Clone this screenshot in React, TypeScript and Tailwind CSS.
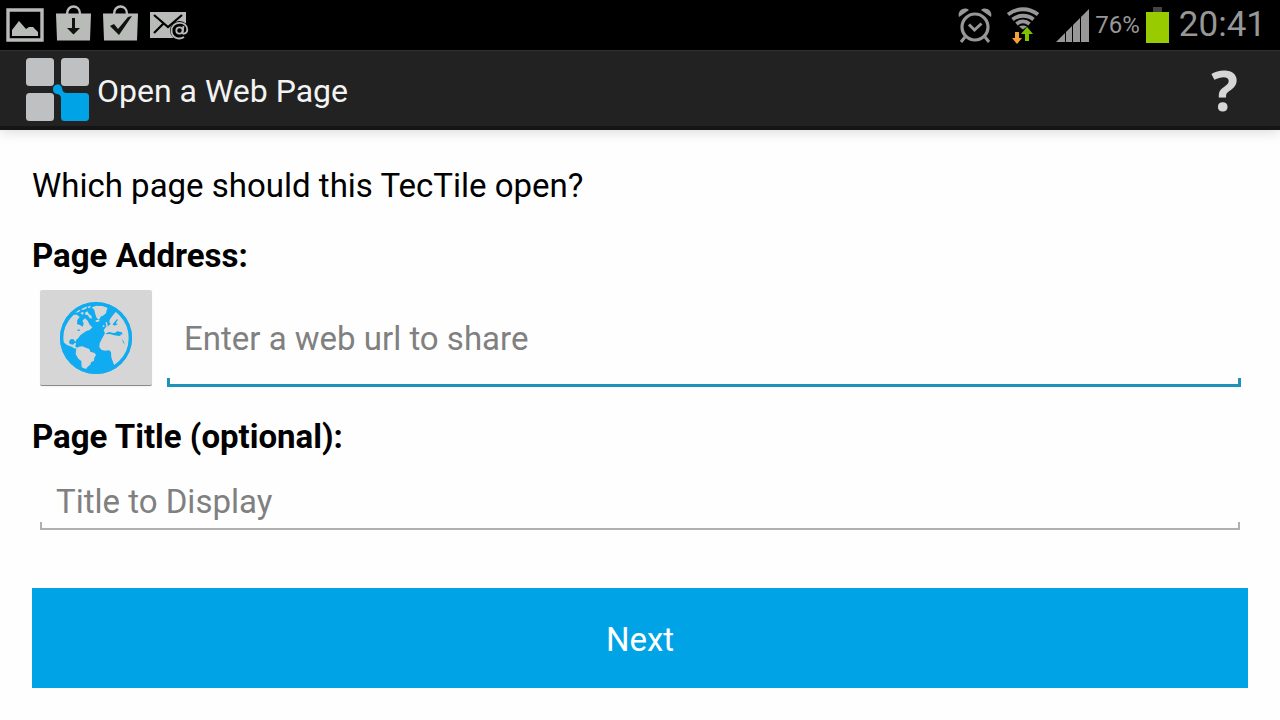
function GalleryIcon() {
  return (
    <svg width="38" height="34" viewBox="0 0 38 34" aria-hidden="true">
      <path d="M2 2h34v30H2z" fill="none" stroke="#b9bbb9" strokeWidth="3.4" />
      <path d="M6 28v-6l7-9 7 8 3-2 4 0 5 5v4z" fill="#b9bbb9" />
    </svg>
  );
}

function BagIcon({ mark }: { mark: "download" | "check" }) {
  return (
    <svg width="35" height="36" viewBox="0 0 35 36" aria-hidden="true">
      <path d="M11 9C11-1 24-1 24 9" fill="none" stroke="#b9bbb9" strokeWidth="2.4" />
      <path d="M0 8.5h35L34 35.500H1z" fill="#b9bbb9" />
      {mark === "download" ? (
        <path d="M16 13h3v10h5l-6.500 6.500L11 23h5z" fill="#111" />
      ) : (
        <path d="M7 21l4-2 4 5L25 12l4-1-13 19z" fill="#111" />
      )}
    </svg>
  );
}

function MailIcon() {
  return (
    <svg width="39" height="30" viewBox="0 0 39 30" aria-hidden="true">
      <path d="M0 2h36v26H0z" fill="#b9bbb9" />
      <path d="M4 5l14 12L32 5M4 23l9-9" fill="none" stroke="#000" strokeWidth="2.200" />
      <circle cx="29.500" cy="20.500" r="9.500" fill="#000" />
      <circle cx="29.500" cy="20.500" r="3.200" fill="none" stroke="#b9bbb9" strokeWidth="1.800" />
      <path d="M33.500 16l-1 6.500c0 2.500 4.800 1 4.800-3 0-9-15.800-9-15.800 1 0 8 8 9.500 12.500 6.500" fill="none" stroke="#b9bbb9" strokeWidth="1.800" />
    </svg>
  );
}

function AlarmIcon() {
  return (
    <svg width="34" height="36" viewBox="0 0 34 36" aria-hidden="true">
      <g fill="none" stroke="#979797">
        <circle cx="17" cy="20" r="13" strokeWidth="3.200" />
        <path d="M11 17.500l5.500 5.500 7-6.500" strokeWidth="3" />
        <path d="M7 30l-4 5M27 30l4 5" strokeWidth="3" />
      </g>
      <path d="M1 10C-1 4 6-1 11 3zM33 10c2-6-5-11-10-7z" fill="#979797" />
    </svg>
  );
}

function WifiIcon() {
  return (
    <svg width="34" height="37" viewBox="0 0 34 37" aria-hidden="true">
      <g fill="none" stroke="#979797" strokeWidth="3.800">
        <path d="M2 7.500C11 .5 23 .5 32 7.500" />
        <path d="M6.500 12.500c6-5 15-5 21 0" />
        <path d="M10.500 17c4-3.500 9-3.500 13 0" />
      </g>
      <path d="M13 19.500c2.500-1.500 5.500-1.500 8 0l-4 3z" fill="#979797" />
      <path d="M9 25h4v6h3l-5 6-5-6h3z" fill="#f7a035" />
      <path d="M19 34v-7h-4l6-7 6 7h-4v7z" fill="#7cc400" />
    </svg>
  );
}

function SignalIcon() {
  return (
    <svg width="33" height="33" viewBox="0 0 33 33" aria-hidden="true">
      <path d="M0 33l9-9v9zM10 33V23l6-6v16zM17 33V16l7-7v24zM25 33V8l8-8v33z" fill="#979797" />
    </svg>
  );
}

function BatteryIcon() {
  return (
    <svg width="23" height="36" viewBox="0 0 23 36" aria-hidden="true">
      <path d="M7 0h9v5H7z" fill="#444" />
      <path d="M0 5h23v31H0z" fill="#99cc00" />
    </svg>
  );
}

function TilesLogo() {
  return (
    <svg width="64" height="64" viewBox="0 0 64 64" aria-hidden="true">
      <g fill="#bfc0c2">
        <rect x="1" y="1" width="28" height="28" rx="3.500" />
        <rect x="36" y="1" width="28" height="28" rx="3.500" />
        <rect x="1" y="36" width="28" height="28" rx="3.500" />
      </g>
      <path
        d="M28 32.500a4.600 4.600 0 1 1 9.200-1c.2 3 1.800 4.500 4.800 4.500h18.500a3.500 3.500 0 0 1 3.500 3.500v21a3.500 3.500 0 0 1-3.500 3.500h-21a3.500 3.500 0 0 1-3.500-3.500V42c0-3-1-4.500-4-5a4.600 4.600 0 0 1-4-4.500z"
        fill="#00a3e6"
      />
    </svg>
  );
}

function GlobeIcon() {
  return (
    <svg width="72" height="72" viewBox="15 12 216 216" aria-hidden="true">
      <circle cx="123" cy="120" r="108" fill="#10abf0" />
      <g fill="#d6d6d6">
        {/* north america */}
        <path d="M20 128C22 98 34 72 56 50L66 50 74 57 67 66 66 78 76 82 83 86 86 76 82 68 90 61 98 68 104 80 112 88 104 96 94 99 84 106 76 112 70 120 64 125 61 132 56 124 48 123 42 130 44 138 54 140 60 134 64 137 60 144 67 150 60 152 50 146 36 141z" />
        <path d="M60 44l10-8 7-1-5 7zM78 33l12-6 8-2-5 7-10 4zM76 46l6-4 5 3-4 5zM90 44l7-4 5 8 7 5 2 9-8-3-4-7-8-2zM101 25l7-3-3 7-7 2z" />
        {/* greenland */}
        <path d="M110 28l14-5 18 1 16 5-3 8-2 9-9 7-6 2-6 10-7-5-4-11-3-13z" />
        {/* south america */}
        <path d="M64 151l8-5 10-1 12 5 9 3 3 8 13 4 4 6-5 8-1 9-9 5-2 7-8 6-5 8 2 3-8-1-7-8-1-19-9-7-8-14z" />
        {/* europe and africa */}
        <path d="M184 40L172 54 164 65 163 73 167 77 160 84 152 88 146 97 150 106 142 120 134 136 133 148 140 156 150 158 162 157 168 162 169 178 176 198 180 204C208 186 228 156 228 120 228 86 208 58 184 40z" />
        <path d="M151 74l5-3 1 8 2 6-7 1 2-6zM144 82l4-1 0 5-5 2zM122 67l8-2 5 3-7 4-6-1z" />
      </g>
      {/* inland seas */}
      <path d="M153 106l11-4 7 2 9 1 7-5 13 3 3 6-8 1 2 4-9-1-10-1-13-4-11 1zM187 62l-9 11-5 6 5 4 11-5-7-2 6-9zM200 121l4 11 5 9-2-9zM67 95l6-1 2 4-7 1z" fill="#10abf0" />
      <circle cx="123" cy="120" r="103" fill="none" stroke="#10abf0" strokeWidth="10" />
    </svg>
  );
}

function StatusBar() {
  return (
    <div className="flex h-[50px] items-center justify-between bg-black pr-3.5 pl-1.5 text-[#979797]">
      <div className="flex items-center gap-3">
        <GalleryIcon />
        <div className="flex gap-3 pb-1">
          <BagIcon mark="download" />
          <BagIcon mark="check" />
        </div>
        <MailIcon />
      </div>
      <div className="flex items-center">
        <AlarmIcon />
        <div className="pr-4 pl-3.5">
          <WifiIcon />
        </div>
        <SignalIcon />
        <span className="px-1.5 text-2xl">76%</span>
        <BatteryIcon />
        <span className="pl-2.5 text-[35px]">20:41</span>
      </div>
    </div>
  );
}

function ActionBar() {
  return (
    <header className="flex h-20 items-center justify-between border-t border-b-4 border-t-[#303030] border-b-[#151515] bg-[#222] pr-8 pl-[25px] shadow-[0_2px_12px_rgba(0,0,0,0.15)]">
      <div className="flex items-center gap-2">
        <TilesLogo />
        <h1 className="pt-1 text-[32px] leading-10 text-[#f3f3f3]">Open a Web Page</h1>
      </div>
      <button type="button" aria-label="Help" className="px-2.5 font-['Open_Sans'] text-[56px] leading-none font-bold text-[#d6d6d6]">
        ?
      </button>
    </header>
  );
}

export default function App() {
  return (
    <div className="min-h-screen bg-[#fefefe] font-[Roboto,sans-serif] text-black">
      <StatusBar />
      <ActionBar />
      <main className="px-8 pt-9 pb-8">
        <form>
          <p className="text-[33px] leading-10">Which page should this TecTile open?</p>
          <label htmlFor="address" className="mt-[30px] block text-[33px] leading-10 font-bold">
            Page Address:
          </label>
          <div className="mt-3.5 flex gap-[15px] pr-[7px] pl-2">
            <button
              type="button"
              aria-label="Browse"
              className="flex h-24 w-28 shrink-0 items-center justify-center rounded-xs border-b border-[#8b8b8b] bg-[#d6d6d6] shadow-xs"
            >
              <GlobeIcon />
            </button>
            <div className="flex min-w-0 flex-1 flex-col">
              <input
                id="address"
                type="text"
                placeholder="Enter a web url to share"
                className="h-[88px] w-full px-[17px] pt-2 text-[33px] outline-none placeholder:text-[#808080]"
              />
              <div className="h-[9px] border-x-3 border-b-3 border-[#1f93b7]" />
            </div>
          </div>
          <label htmlFor="title" className="mt-[30px] block text-[33px] leading-10 font-bold">
            Page Title (optional):
          </label>
          <div className="mt-[15px] px-2">
            <input
              id="title"
              type="text"
              placeholder="Title to Display"
              className="block h-[50px] w-full px-4 pt-2 text-[33px] outline-none placeholder:text-[#808080]"
            />
            <div className="h-2 border-x-2 border-b-2 border-[#b0b0b0]" />
          </div>
          <button type="submit" className="mt-[58px] h-[100px] w-full bg-[#00a3e6] pt-1 text-[33px] text-white">
            Next
          </button>
        </form>
      </main>
    </div>
  );
}
